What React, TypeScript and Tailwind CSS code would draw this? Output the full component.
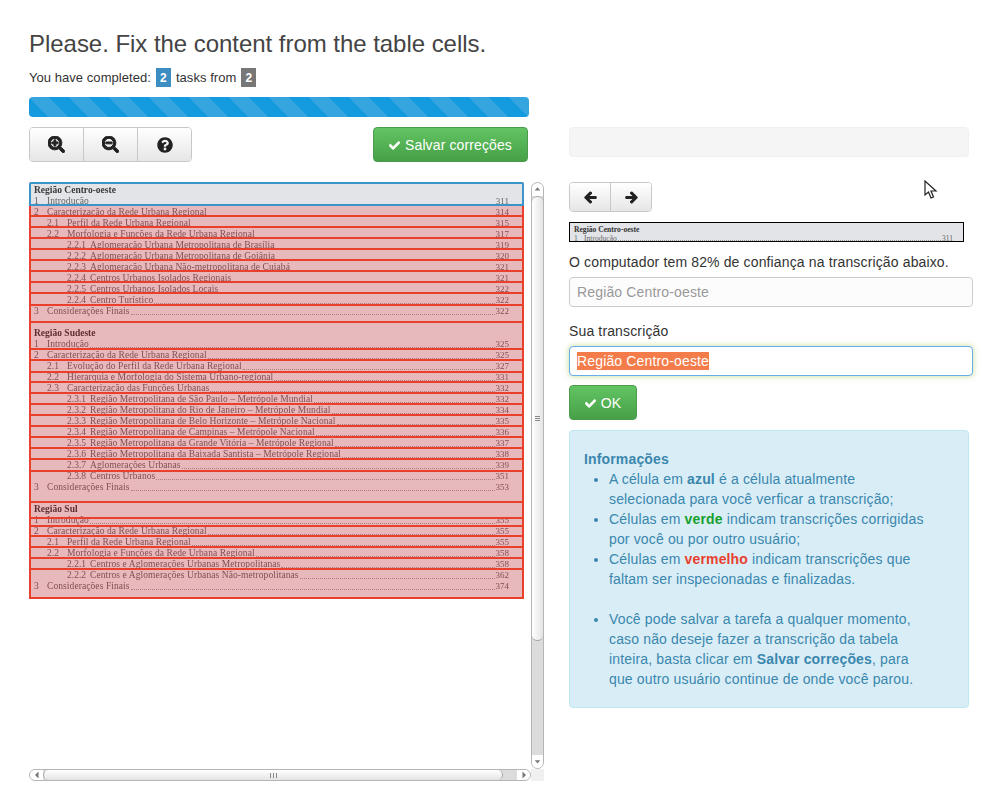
import { FaArrowLeft, FaArrowRight, FaCheck, FaQuestionCircle, FaSearchMinus, FaSearchPlus } from "react-icons/fa";

type Line = { n?: string; t?: string; p?: string; level?: number; bold?: boolean };

const lines: Line[] = [
  { t: "Região Centro-oeste", bold: true },
  { n: "1", t: "Introdução", p: "311" },
  { n: "2", t: "Caracterização da Rede Urbana Regional", p: "314" },
  { n: "2.1", t: "Perfil da Rede Urbana Regional", p: "315", level: 1 },
  { n: "2.2", t: "Morfologia e Funções da Rede Urbana Regional", p: "317", level: 1 },
  { n: "2.2.1", t: "Aglomeração Urbana Metropolitana de Brasília", p: "319", level: 2 },
  { n: "2.2.2", t: "Aglomeração Urbana Metropolitana de Goiânia", p: "320", level: 2 },
  { n: "2.2.3", t: "Aglomeração Urbana Não-metropolitana de Cuiabá", p: "321", level: 2 },
  { n: "2.2.4", t: "Centros Urbanos Isolados Regionais", p: "321", level: 2 },
  { n: "2.2.5", t: "Centros Urbanos Isolados Locais", p: "322", level: 2 },
  { n: "2.2.4", t: "Centro Turístico", p: "322", level: 2 },
  { n: "3", t: "Considerações Finais", p: "322" },
  {},
  { t: "Região Sudeste", bold: true },
  { n: "1", t: "Introdução", p: "325" },
  { n: "2", t: "Caracterização da Rede Urbana Regional", p: "325" },
  { n: "2.1", t: "Evolução do Perfil da Rede Urbana Regional", p: "327", level: 1 },
  { n: "2.2", t: "Hierarquia e Morfologia do Sistema Urbano-regional", p: "331", level: 1 },
  { n: "2.3", t: "Caracterização das Funções Urbanas", p: "332", level: 1 },
  { n: "2.3.1", t: "Região Metropolitana de São Paulo – Metrópole Mundial", p: "332", level: 2 },
  { n: "2.3.2", t: "Região Metropolitana do Rio de Janeiro – Metrópole Mundial", p: "334", level: 2 },
  { n: "2.3.3", t: "Região Metropolitana de Belo Horizonte – Metrópole Nacional", p: "335", level: 2 },
  { n: "2.3.4", t: "Região Metropolitana de Campinas – Metrópole Nacional", p: "336", level: 2 },
  { n: "2.3.5", t: "Região Metropolitana da Grande Vitória – Metrópole Regional", p: "337", level: 2 },
  { n: "2.3.6", t: "Região Metropolitana da Baixada Santista – Metrópole Regional", p: "338", level: 2 },
  { n: "2.3.7", t: "Aglomerações Urbanas", p: "339", level: 2 },
  { n: "2.3.8", t: "Centros Urbanos", p: "351", level: 2 },
  { n: "3", t: "Considerações Finais", p: "353" },
  {},
  { t: "Região Sul", bold: true },
  { n: "1", t: "Introdução", p: "355" },
  { n: "2", t: "Caracterização da Rede Urbana Regional", p: "355" },
  { n: "2.1", t: "Perfil da Rede Urbana Regional", p: "355", level: 1 },
  { n: "2.2", t: "Morfologia e Funções da Rede Urbana Regional", p: "358", level: 1 },
  { n: "2.2.1", t: "Centros e Aglomerações Urbanas Metropolitanas", p: "358", level: 2 },
  { n: "2.2.2", t: "Centros e Aglomerações Urbanas Não-metropolitanas", p: "362", level: 2 },
  { n: "3", t: "Considerações Finais", p: "374" },
];

// bottom edge of each cell on the scanned page, from the top of the page
const cellEnds = [
  24, 35, 46, 57, 68, 79, 90, 101, 112, 124, 141, 168, 179, 191, 201, 212, 223, 234, 245, 256, 267, 278, 290, 321,
  337, 345, 355, 366, 377, 388, 417,
];

function DocLine({ line }: { line: Line }) {
  if (!line.t) return <div className="h-[11px]" />;
  if (line.bold) {
    return <div className="h-[11px] pl-[5px] font-bold text-[#3a3a3a]">{line.t}</div>;
  }
  const level = line.level ?? 0;
  return (
    <div className="flex h-[11px] items-end pr-[15px] pl-[5px] text-[#666264]">
      <span className={level === 0 ? "w-[13px] shrink-0" : level === 1 ? "ml-[13px] w-[20px] shrink-0" : "ml-[33px] w-[23px] shrink-0"}>
        {line.n}
      </span>
      <span className="shrink-0 tracking-[0.08px]">{line.t}</span>
      <span className="mx-[1px] mb-[2px] flex-1 border-b border-dotted border-[#999]" />
      <span className="shrink-0 text-[9px]">{line.p}</span>
    </div>
  );
}

function Cells() {
  return (
    <div className="absolute inset-0 flex flex-col">
      {cellEnds.map((end, i) => {
        const h = end - (i === 0 ? 0 : cellEnds[i - 1]);
        return i === 0 ? (
          <div key={i} style={{ height: h }} className="rounded-t-[2px] border-2 border-[#3b95c9]" />
        ) : (
          <div key={i} style={{ height: h }} className="border-x-2 border-b-2 border-[#e9402c] bg-[#ff000030]" />
        );
      })}
    </div>
  );
}

function ScrollEnd({ dir }: { dir: "up" | "down" | "left" | "right" }) {
  const arrow = {
    up: "M3 6.5 L6 3 L9 6.5 Z",
    down: "M3 4 L6 7.5 L9 4 Z",
    left: "M7.5 2.5 L4 6 L7.5 9.5 Z",
    right: "M4.5 2.5 L8 6 L4.5 9.5 Z",
  }[dir];
  return (
    <svg viewBox="0 0 12 12" className="size-[12px]">
      <path d={arrow} fill="#777" />
    </svg>
  );
}

function Viewer() {
  return (
    <div className="grid h-[599px] w-[515px] grid-cols-[502px_13px] grid-rows-[587px_12px]">
      <div className="overflow-hidden">
        <div className="relative h-[417px] w-[495px] bg-[#e3e4e8]">
          <div className="pt-[3px] font-['Liberation_Serif',serif] text-[9.5px] leading-[11px] blur-[0.3px]">
            {lines.map((line, i) => (
              <DocLine key={i} line={line} />
            ))}
          </div>
          <Cells />
        </div>
      </div>

      <div className="flex flex-col items-center rounded-full border border-[#b5b5b5] bg-[#dcdcdc]">
        <div className="flex h-[13px] w-full shrink-0 items-center justify-center rounded-t-full bg-white">
          <ScrollEnd dir="up" />
        </div>
        <div className="flex h-[445px] w-full shrink-0 flex-col items-center justify-center gap-[1px] rounded-full border-y border-[#a8a8a8] bg-linear-to-r from-white to-[#e4e4e4]">
          <div className="h-px w-[5px] bg-[#888]" />
          <div className="h-px w-[5px] bg-[#888]" />
          <div className="h-px w-[5px] bg-[#888]" />
        </div>
        <div className="flex-1" />
        <div className="flex h-[13px] w-full shrink-0 items-center justify-center rounded-b-full bg-white">
          <ScrollEnd dir="down" />
        </div>
      </div>

      <div className="flex items-center rounded-full border border-[#b5b5b5] bg-[#dcdcdc]">
        <div className="flex h-full w-[13px] shrink-0 items-center justify-center rounded-l-full bg-white">
          <ScrollEnd dir="left" />
        </div>
        <div className="flex h-full w-[460px] shrink-0 items-center justify-center gap-[2px] rounded-full border-x border-[#a8a8a8] bg-linear-to-b from-white to-[#e4e4e4]">
          <div className="h-[5px] w-px bg-[#888]" />
          <div className="h-[5px] w-px bg-[#888]" />
          <div className="h-[5px] w-px bg-[#888]" />
        </div>
        <div className="flex-1" />
        <div className="flex h-full w-[13px] shrink-0 items-center justify-center rounded-r-full bg-white">
          <ScrollEnd dir="right" />
        </div>
      </div>
      <div className="bg-[#f0f0f0]" />
    </div>
  );
}

const greyBtn =
  "flex items-center justify-center border-[#c8c8c8] bg-linear-to-b from-white to-[#e6e6e6] text-[#222]";
const greenBtn =
  "flex h-[35px] items-center justify-center gap-[5px] rounded-[4px] border border-[#4a9c4a] bg-linear-to-b from-[#62c462] to-[#47a047] pt-[1px] text-[14px] tracking-[0.12px] text-white";

function InfoList() {
  return (
    <ul className="mr-[25px] ml-[25px] list-disc text-[14px] leading-[20px] tracking-[0.15px]">
      <li>
        A célula em <b>azul</b> é a célula atualmente selecionada para você verficar a transcrição;
      </li>
      <li>
        Células em <b className="text-[#16a02c]">verde</b> indicam transcrições corrigidas por você ou por outro usuário;
      </li>
      <li>
        Células em <b className="text-[#e8402c]">vermelho</b> indicam transcrições que faltam ser inspecionadas e finalizadas.
      </li>
      <li className="mt-[20px]">
        Você pode salvar a tarefa a qualquer momento, caso não deseje fazer a transcrição da tabela inteira, basta clicar em{" "}
        <b>Salvar correções</b>, para que outro usuário continue de onde você parou.
      </li>
    </ul>
  );
}

export default function App() {
  return (
    <div className="relative h-[789px] w-[991px] overflow-hidden bg-white font-['Liberation_Sans',sans-serif] text-[#333]">
      <div className="px-[29px] pt-[29px]">
        <h1 className="text-[24px] leading-[30px] tracking-[-0.04px] text-[#444]">Please. Fix the content from the table cells.</h1>
        <p className="mt-[9px] flex h-[19px] items-center text-[13px] tracking-[0.05px] text-[#333]">
          You have completed:
          <span className="mx-[5px] flex h-[19px] w-[15px] items-center justify-center bg-[#3b8dc2] text-[12px] font-bold text-white">2</span>
          tasks from
          <span className="ml-[5px] flex h-[19px] w-[15px] items-center justify-center bg-[#777] text-[12px] font-bold text-white">2</span>
        </p>
        <div className="mt-[10px] h-[20px] w-[500px] rounded-[4px] bg-[repeating-linear-gradient(45deg,#149bdf_0,#149bdf_14.14px,#35a5e0_14.14px,#35a5e0_28.28px)]" />

        <div className="mt-[10px] flex gap-[25px]">
          <div className="w-[515px]">
            <div className="flex w-[499px] items-start justify-between">
              <div className="flex h-[35px] w-[163px] overflow-hidden rounded-[4px] border border-[#c8c8c8]">
                <div className={`${greyBtn} flex-1`}><FaSearchPlus className="size-[17px] stroke-[30]" /></div>
                <div className={`${greyBtn} flex-1 border-l`}><FaSearchMinus className="size-[17px] stroke-[30]" /></div>
                <div className={`${greyBtn} flex-1 border-l`}><FaQuestionCircle className="size-[16px]" /></div>
              </div>
              <button type="button" className={`${greenBtn} w-[155px]`}>
                <FaCheck className="size-[11px] stroke-[30]" />
                Salvar correções
              </button>
            </div>
            <div className="mt-[20px]">
              <Viewer />
            </div>
          </div>

          <div className="w-[404px]">
            <div className="h-[30px] w-[400px] rounded-[4px] border border-[#f0f0f0] bg-[#f5f5f5]" />
            <div className="mt-[25px] flex h-[30px] w-[83px] overflow-hidden rounded-[4px] border border-[#c8c8c8]">
              <div className={`${greyBtn} flex-1`}><FaArrowLeft className="size-[13px] stroke-[40]" /></div>
              <div className={`${greyBtn} flex-1 border-l`}><FaArrowRight className="size-[13px] stroke-[40]" /></div>
            </div>
            <div className="mt-[10px] h-[20px] w-[395px] overflow-hidden border border-black bg-[#e3e4e8] pt-[2px] pr-[10px] pl-[4px] font-['Liberation_Serif',serif] text-[7.6px] leading-[9px]">
              <div className="font-bold text-[#333]">{lines[0].t}</div>
              <div className="flex text-[#666]">
                <span className="w-[10px]">{lines[1].n}</span>
                <span>{lines[1].t}</span>
                <span className="mx-[1px] mb-[2px] flex-1 border-b border-dotted border-[#999]" />
                <span>{lines[1].p}</span>
              </div>
            </div>
            <p className="mt-[10px] text-[14px] leading-[20px] tracking-[0.14px]">O computador tem 82% de confiança na transcrição abaixo.</p>
            <input
              readOnly
              placeholder="Região Centro-oeste"
              className="mt-[5px] block h-[30px] w-[404px] rounded-[4px] border border-[#ccc] bg-[#fcfcfc] px-[7px] text-[14px] tracking-[0.15px] placeholder:text-[#999]"
            />
            <p className="mt-[14px] text-[14px] leading-[20px] tracking-[0.14px]">Sua transcrição</p>
            <div className="mt-[5px] flex h-[30px] w-[404px] items-center rounded-[4px] border border-[#66afe9] bg-white px-[7px] text-[14px] tracking-[0.15px] shadow-[0_0_6px_rgba(160,200,80,0.6)]">
              <span className="bg-[#f47c4a] leading-[18px] text-white">Região Centro-oeste</span>
            </div>
            <button type="button" className={`${greenBtn} mt-[9px] w-[68px]`}>
              <FaCheck className="size-[11px] stroke-[30]" />
              OK
            </button>
            <div className="mt-[10px] h-[278px] w-[400px] rounded-[4px] border border-[#bce8f1] bg-[#d9edf7] px-[14px] pt-[18px] text-[#3a87ad]">
              <h4 className="text-[14px] leading-[20px] font-bold tracking-[0.15px]">Informações</h4>
              <InfoList />
            </div>
          </div>
        </div>
      </div>

      {/* mouse pointer caught in the screenshot */}
      <svg viewBox="0 0 14 20" className="absolute top-[180px] left-[924px] h-[20px] w-[14px]">
        <path d="M1 1 L1 15 L4.5 12 L7 18 L9.5 17 L7 11 L12 11 Z" fill="#fff" stroke="#222" strokeWidth="1.2" />
      </svg>
    </div>
  );
}
